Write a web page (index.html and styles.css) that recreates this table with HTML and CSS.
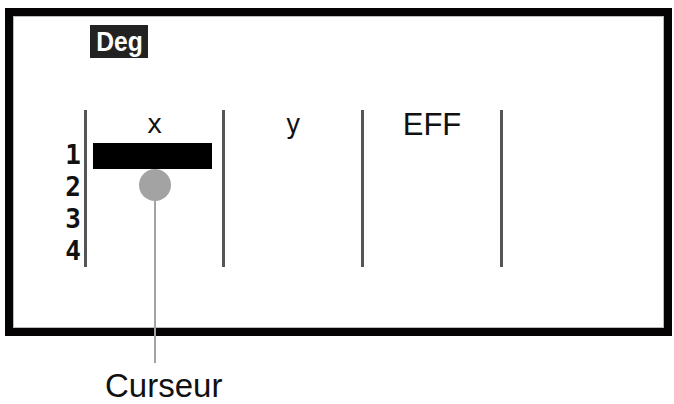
FILE: index.html
```html
<!DOCTYPE html>
<html lang="fr">
<head>
<meta charset="utf-8">
<title>Curseur</title>
<link rel="stylesheet" href="styles.css">
</head>
<body>
  <div class="screen">
    <div class="badge"><span class="badge-text">Deg</span></div>
    <div class="table">
      <div class="rownums">
        <div class="hdr"></div>
        <div class="num">1</div>
        <div class="num">2</div>
        <div class="num">3</div>
        <div class="num">4</div>
      </div>
      <div class="col first">
        <div class="hdr lcd">x</div>
        <div class="cell"><div class="cursor-bar"></div></div>
      </div>
      <div class="col">
        <div class="hdr lcd">y</div>
      </div>
      <div class="col">
        <div class="hdr eff">EFF</div>
      </div>
    </div>
  </div>
  <div class="label">Curseur</div>

  <div class="pointer-dot"></div>
  <div class="pointer-stem"></div>
</body>
</html>
```
FILE: styles.css
```css
html, body {
  margin: 0;
  padding: 0;
}
body {
  position: relative;
  width: 674px;
  height: 404px;
  overflow: hidden;
  background: #ffffff;
  font-family: "Liberation Sans", Arial, sans-serif;
  color: #111;
}
.screen {
  box-sizing: border-box;
  margin: 8px 0 0 5px;
  width: 667px;
  height: 328px;
  border: 8px solid #060304;
  box-shadow: inset 0 0 0 1px #bbbbbb;
  display: flex;
  flex-direction: column;
  align-items: flex-start;
}
.badge {
  margin: 9px 0 0 77px;
  width: 58px;
  height: 33px;
  background: #222;
  display: flex;
  justify-content: center;
}
.badge-text {
  display: inline-block;
  color: #fff;
  font-weight: bold;
  font-size: 28px;
  line-height: 33px;
  transform: scaleX(0.88);
}
.table {
  margin: 52px 0 0 52px;
  display: flex;
  height: 157px;
}
.rownums {
  width: 16px;
  padding-right: 3px;
  display: flex;
  flex-direction: column;
  align-items: flex-end;
}
.hdr {
  height: 29px;
  line-height: 29px;
  text-align: center;
}
.num {
  height: 32px;
  line-height: 32px;
  font-family: "DejaVu Sans Mono", monospace;
  font-weight: bold;
  font-size: 26px;
  color: #111;
}
.col {
  width: 136px;
  border-right: 3px solid #555;
  display: flex;
  flex-direction: column;
}
.col.first {
  width: 135px;
  border-left: 3px solid #555;
}
.lcd {
  font-family: "DejaVu Sans Mono", monospace;
  font-size: 26px;
  color: #111;
}
.eff {
  font-size: 31px;
  color: #111;
}
.cell {
  height: 32px;
}
.cursor-bar {
  margin: 4px 0 0 6px;
  width: 119px;
  height: 26px;
  background: #000;
}
.label {
  margin: 31px 0 0 105px;
  font-size: 33px;
  line-height: 38px;
  color: #111;
}
.pointer-dot {
  position: absolute;
  left: 139px;
  top: 169px;
  width: 32px;
  height: 32px;
  border-radius: 50%;
  background: #a3a3a3;
}
.pointer-stem {
  position: absolute;
  left: 154px;
  top: 198px;
  width: 2px;
  height: 165px;
  background: #a3a3a3;
}
```
